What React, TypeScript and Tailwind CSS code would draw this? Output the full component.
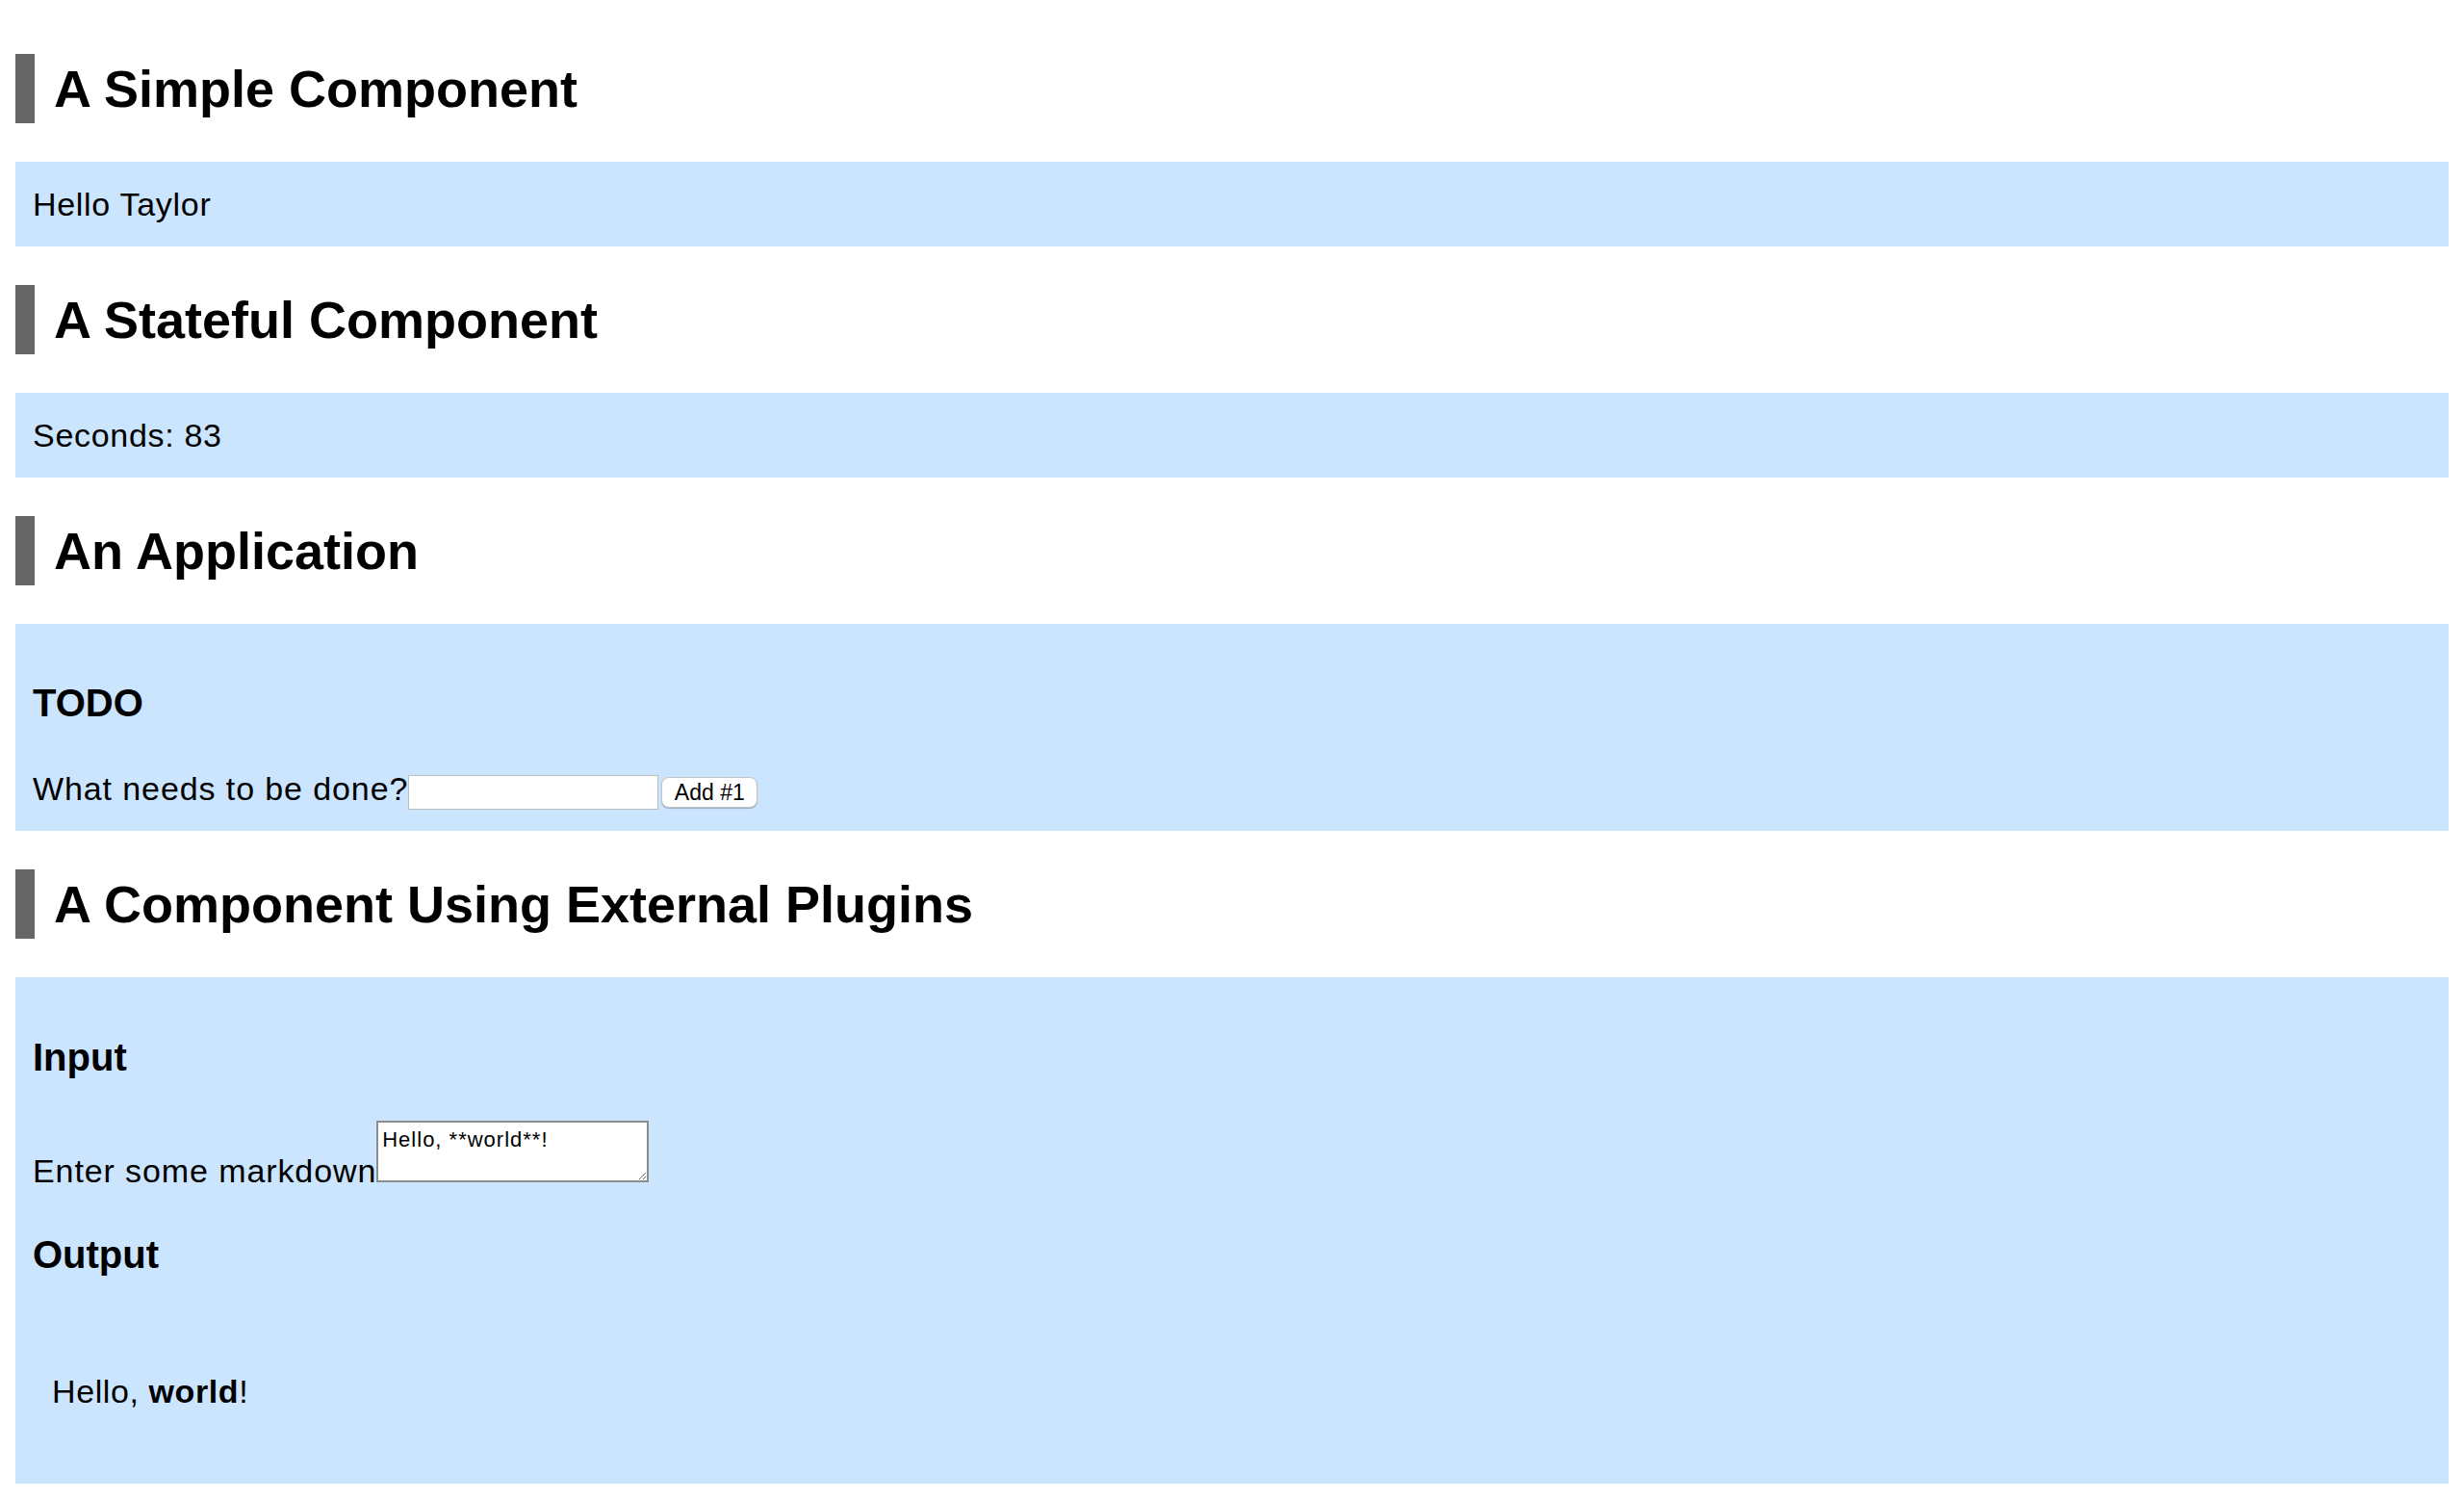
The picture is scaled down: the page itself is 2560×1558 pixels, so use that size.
import { useState } from "react";

function Heading({ title }: { title: string }) {
    return (
        <h2 className="my-10 border-l-[20px] border-[#666666] pl-5 text-[54px] font-bold leading-[72px] text-black">
            {title}
        </h2>
    )
}

function Box({ children, className = "" }: { children: React.ReactNode, className?: string }) {
    return (
        <div className={`bg-[#cce5ff] px-[18px] ${className}`}>
            {children}
        </div>
    )
}

function TodoApp() {
    const [text, setText] = useState("");
    return (
        <Box className="pt-[58px] pb-[14px]">
            <h3 className="text-[40px] font-bold leading-[48px]">TODO</h3>
            <form className="mt-[43px] flex h-[52px] items-center" onSubmit={(e) => e.preventDefault()}>
                <label htmlFor="new-todo" className="pb-2 text-[34px] leading-[51px] tracking-[0.9px]">
                    What needs to be done?
                </label>
                <input
                    id="new-todo"
                    value={text}
                    onChange={(e) => setText(e.target.value)}
                    className="h-[36px] w-[260px] border border-[#bdbdbd] bg-white px-1 outline-none"
                />
                <button className="ml-[3px] h-[32px] w-[100px] rounded-lg border border-[#c4c4c4] bg-white text-[23px] leading-none shadow-[0_1px_1px_rgba(0,0,0,0.25)]">
                    Add #1
                </button>
            </form>
        </Box>
    )
}

function MarkdownEditor() {
    return (
        <Box className="pt-[59px] pb-[70px]">
            <h3 className="text-[40px] font-bold leading-[48px]">Input</h3>
            <div className="mt-[42px] flex h-[64px] items-end">
                <label htmlFor="markdown-content" className="text-[34px] leading-[24px] tracking-[0.9px]">
                    Enter some markdown
                </label>
                <textarea
                    id="markdown-content"
                    defaultValue="Hello, **world**!"
                    className="h-[64px] w-[283px] border-2 border-[#8c8c8c] bg-white px-1 pt-1 text-[22px] leading-[28px] tracking-[1px] outline-none"
                />
            </div>
            <h3 className="mt-[51px] text-[40px] font-bold leading-[48px]">Output</h3>
            <div className="ml-5 mt-[93px] text-[34px] leading-[51px] tracking-[0.6px]">
                Hello, <strong className="font-bold">world</strong>!
            </div>
        </Box>
    )
}

export default function App() {
    return (
        <div className="min-h-screen bg-white px-4 pt-4 font-['Liberation_Sans',Arial,sans-serif] text-black">
            <Heading title="A Simple Component" />
            <Box className="py-4 text-[34px] leading-[56px] tracking-[0.7px]">Hello Taylor</Box>

            <Heading title="A Stateful Component" />
            <Box className="py-4 text-[34px] leading-[56px] tracking-[0.7px]">Seconds: 83</Box>

            <Heading title="An Application" />
            <TodoApp />

            <Heading title="A Component Using External Plugins" />
            <MarkdownEditor />
        </div>
    )
}
